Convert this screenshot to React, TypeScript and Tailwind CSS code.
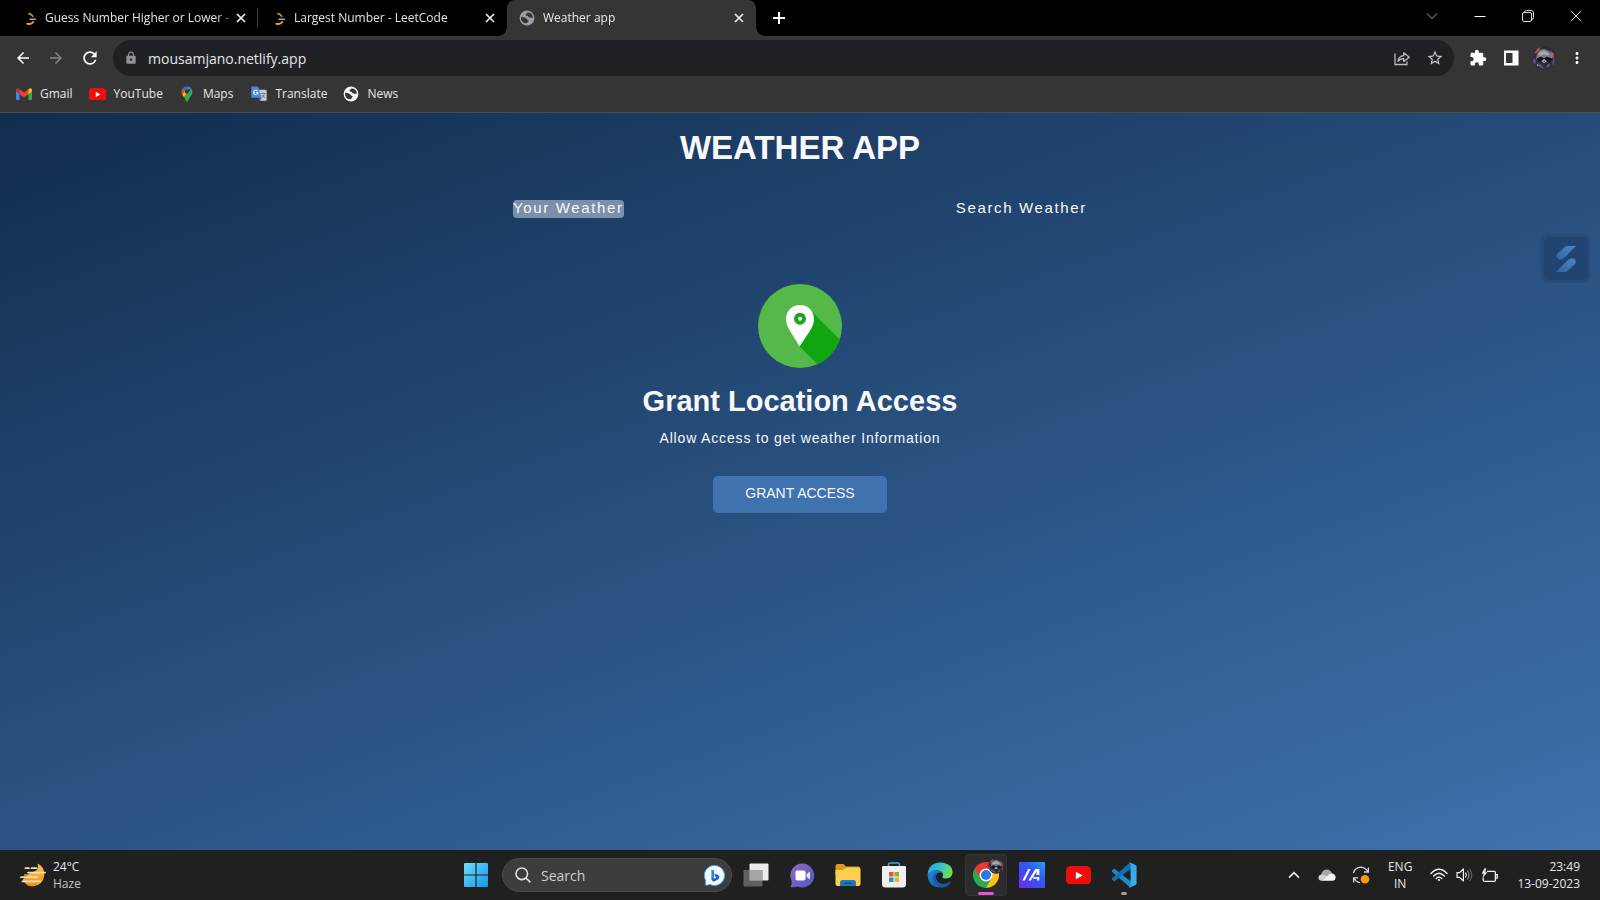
import type { ReactNode } from "react";
import {
  MdArrowBack,
  MdArrowForward,
  MdExtension,
  MdLock,
  MdMoreVert,
  MdRefresh,
  MdStarBorder,
} from "react-icons/md";

function GlobeIcon({ disc, land }: { disc: string; land: string }) {
  return (
    <svg viewBox="0 0 16 16" className="size-4 shrink-0" aria-hidden="true">
      <circle cx="8" cy="8" r="7.4" fill={disc} />
      <path
        d="M2.2 6.6 5.6 7.4Q7 7.6 7.6 8.8 8.3 10.2 9.2 10.1 10 10.2 9.4 11.3 8.6 12.6 7.4 13.2 4 13.4 2.4 10.2 1.8 8.2 2.2 6.6Z"
        fill={land}
      />
      <path
        d="M8.6 2.2Q8.6 3.4 7.4 3.6 6.2 4 6.8 5.2 7.4 5.8 8.6 5.7 9.2 7.4 10.6 7.4L13.6 8Q14 6.2 13 4.6 11.4 2.4 8.6 2.2Z"
        fill={land}
      />
    </svg>
  );
}

function LeetCodeIcon() {
  return (
    <svg viewBox="0 0 16 16" className="size-4 shrink-0" fill="none" strokeLinecap="round" aria-hidden="true">
      <path d="M8 3.6Q10.4 4 11.8 6.4" stroke="#d8942a" strokeWidth="1.6" />
      <path d="M6.4 13.8Q10.6 14.6 12.2 12" stroke="#f0a02c" strokeWidth="2" />
      <path d="M9 9.2H14.4" stroke="#a3a3a3" strokeWidth="1.5" />
    </svg>
  );
}

function CloseIcon() {
  return (
    <svg viewBox="0 0 10 10" className="size-[10px]" stroke="#f1f1f1" strokeWidth="1.7" aria-hidden="true">
      <path d="M1 1 9 9M9 1 1 9" />
    </svg>
  );
}

function BrowserTab({ title, icon, active = false, divider = false }: { title: string; icon: ReactNode; active?: boolean; divider?: boolean }) {
  return (
    <div
      className={
        active
          ? "relative flex h-9 w-[249px] items-center rounded-t-lg bg-[#353535] px-3 text-[#ececec]"
          : "relative flex h-9 w-[249px] items-center px-3 text-[#e4e4e4]"
      }
    >
      {icon}
      <button className="ml-2 flex-1 text-left whitespace-nowrap [mask-image:linear-gradient(to_right,black_92%,rgb(0_0_0/0.3))]">
        {title}
      </button>
      <button aria-label={`Close ${title}`} className="ml-1 flex size-[10px] items-center">
        <CloseIcon />
      </button>
      {divider && <span className="absolute top-2 right-0 h-5 w-px bg-[#3f3f3f]" />}
      {active && (
        <>
          <span className="absolute bottom-0 -left-2 size-2 bg-[radial-gradient(circle_at_0_0,#000_7px,#353535_8px)]" />
          <span className="absolute -right-2 bottom-0 size-2 bg-[radial-gradient(circle_at_100%_0,#000_7px,#353535_8px)]" />
        </>
      )}
    </div>
  );
}

function TabStrip() {
  return (
    <header className="flex h-9 items-center bg-black pl-[9px] text-[12px]">
      <div className="flex items-center">
        <div className="flex">
          <BrowserTab title="Guess Number Higher or Lower -" icon={<LeetCodeIcon />} divider />
          <BrowserTab title="Largest Number - LeetCode" icon={<LeetCodeIcon />} />
          <BrowserTab title="Weather app" icon={<GlobeIcon disc="#9aa0a6" land="#353535" />} active />
        </div>
        <button aria-label="New tab" className="ml-[15px] p-px">
          <svg viewBox="0 0 14 14" className="size-[14px]" stroke="#fff" strokeWidth="2">
            <path d="M7 1V13M1 7H13" />
          </svg>
        </button>
      </div>
      <div className="-mt-1 ml-auto flex items-center text-white">
        <button aria-label="Search tabs" className="flex w-12 justify-center">
          <svg viewBox="0 0 12 12" className="size-3" fill="none" stroke="#aaa">
            <path d="M1 3.5 6 8.5 11 3.5" />
          </svg>
        </button>
        <button aria-label="Minimize" className="flex w-12 justify-center">
          <svg viewBox="0 0 12 12" className="size-3" fill="none" stroke="#fff">
            <path d="M0.5 6.5H11.5" />
          </svg>
        </button>
        <button aria-label="Restore" className="flex w-12 justify-center">
          <svg viewBox="0 0 12 12" className="size-3" fill="none" stroke="#ddd">
            <rect x="0.5" y="2.5" width="9" height="9" rx="1.5" />
            <path d="M2.5 2.5Q2.5 0.5 4.5 0.5H9Q11.5 0.5 11.5 3V7.5Q11.5 9.5 9.5 9.5" />
          </svg>
        </button>
        <button aria-label="Close window" className="flex w-12 justify-center">
          <svg viewBox="0 0 12 12" className="size-3" stroke="#ddd">
            <path d="M0.8 0.8 11.2 11.2M11.2 0.8 0.8 11.2" />
          </svg>
        </button>
      </div>
    </header>
  );
}

function RaccoonAvatar({ className }: { className: string }) {
  return (
    <svg viewBox="0 0 24 24" className={className} aria-hidden="true">
      <circle cx="12" cy="12" r="11.5" fill="#2f2a3c" />
      <path d="M2 8 5 3 9 1 6 6ZM18 4 22 8 22 13 20 11Z" fill="#b5594c" />
      <path d="M1 14 3 12 4 17 2 18ZM21 14 23 13 22 18 20 19Z" fill="#6c4a8c" />
      <path d="M5 8 8 4 12 3 17 5 20 9 20 12 17 15H7L4 13Z" fill="#7d7f88" />
      <path d="M6 7 12 4.5 18 8 15 9.6 12 8.6 8 10Z" fill="#a4a8af" />
      <path d="M4.5 12.4 9 10.8 12 12.2 15 10.8 20 12.6 18 16 12.5 14 6.6 16Z" fill="#16131d" />
      <path d="M9.6 15.4 12 12.8 14.6 15.4 12.2 17Z" fill="#c9cbd2" />
      <path d="M11 14.8H13.4L12.2 16.2Z" fill="#111" />
      <path d="M6 17 10 19 12 23 7 21ZM18 17 14 20 15 22 18 20Z" fill="#5b5478" />
      <path d="M4.6 17.6 6.6 19.4 5.8 20.4Z" fill="#d9dbe2" />
    </svg>
  );
}

function Toolbar() {
  return (
    <div className="flex h-10 items-end bg-[#353535] pr-[7px] pl-[14px]">
      <nav aria-label="Navigation" className="flex h-9 items-center gap-[15px] pr-[13px] text-white">
        <button aria-label="Back"><MdArrowBack className="size-[18px]" /></button>
        <button aria-label="Forward"><MdArrowForward className="size-[18px] text-[#868686]" /></button>
        <button aria-label="Reload"><MdRefresh className="size-5" /></button>
      </nav>
      <div className="flex h-9 flex-1 items-center rounded-full bg-[#202124] pr-[10px] pl-[11px]">
        <MdLock className="size-[14px] text-[#8f949c]" />
        <input
          aria-label="Address"
          defaultValue="mousamjano.netlify.app"
          className="ml-[10px] flex-1 bg-transparent text-[14px] text-[#e4e6ea] outline-none"
        />
        <button aria-label="Share" className="mr-4">
          <svg viewBox="0 0 16 16" className="size-4" fill="none" stroke="#b9bbbe" strokeWidth="1.3">
            <path d="M1 3.5V14.5H13V11.5" />
            <path d="M4 11.5Q4.4 6.2 9.8 5.7V2.7L15.2 7.2 9.8 11.6V8.7Q6 8.6 4 11.5Z" strokeLinejoin="round" />
          </svg>
        </button>
        <button aria-label="Bookmark"><MdStarBorder className="size-[18px] text-[#c4c6c9]" /></button>
      </div>
      <div className="flex h-9 items-center pl-[7px] text-white">
        <button aria-label="Extensions" className="flex w-[33px] justify-center"><MdExtension className="size-[18px]" /></button>
        <button aria-label="Side panel" className="flex w-[33px] justify-center">
          <svg viewBox="0 0 16 16" className="size-4">
            <path d="M1 0.5H15.5V15.5H1ZM3 3V13H9.5V3Z" fill="#fff" fillRule="evenodd" />
          </svg>
        </button>
        <button aria-label="Profile" className="flex w-[33px] justify-center"><RaccoonAvatar className="size-6" /></button>
        <button aria-label="Menu" className="flex w-[33px] justify-center"><MdMoreVert className="size-[18px]" /></button>
      </div>
    </div>
  );
}

function YouTubeIcon({ className }: { className: string }) {
  return (
    <svg viewBox="0 0 24 18" className={className} aria-hidden="true">
      <rect width="24" height="18" rx="4.5" fill="#f20d0d" />
      <path d="M9.5 5.4 16 9 9.5 12.6Z" fill="#fff" />
    </svg>
  );
}

function Bookmarks() {
  return (
    <nav aria-label="Bookmarks" className="flex h-[37px] items-center border-b border-[#4a4d51] bg-[#353535] pl-4 text-[12px] text-[#e6e6e6]">
      <a href="#gmail" className="mr-4 flex items-center gap-2">
        <svg viewBox="0 0 16 12" className="w-4" aria-hidden="true">
          <path d="M0 2V11Q0 12 1 12H3.6V4.6Z" fill="#4285f4" />
          <path d="M16 2V11Q16 12 15 12H12.4V4.6Z" fill="#34a853" />
          <path d="M3.6 1.2 8 4.6 12.4 1.2V6.2L8 9.5 3.6 6.2Z" fill="#ea4335" />
          <path d="M0 1.9Q0 0 2 0.2L3.6 1.2V6.2L0 3.5Z" fill="#c5362b" />
          <path d="M16 1.9Q16 0 14 0.2L12.4 1.2V6.2L16 3.5Z" fill="#fbbc04" />
        </svg>
        Gmail
      </a>
      <a href="#youtube" className="mr-4 flex items-center gap-2">
        <YouTubeIcon className="w-[17px]" />
        YouTube
      </a>
      <a href="#maps" className="mr-[18px] flex items-center gap-2">
        <svg viewBox="0 0 16 16" className="size-4" aria-hidden="true">
          <path d="M8 0.3Q5.4 0.3 3.7 2.2L6.4 4.5 10 0.7Q9 0.3 8 0.3Z" fill="#1a73e8" />
          <path d="M3.7 2.2Q1.6 5 3.2 8.2L6.4 4.5Z" fill="#ea4335" />
          <path d="M10 0.7 6.4 4.5Q7.4 3.2 8.7 3.7L12.4 2.4Q11.6 1.2 10 0.7Z" fill="#4285f4" />
          <path d="M12.4 2.4 5 11.2 3.2 8.2 6.4 4.5Q6 7 8 7.8Q10 7.6 10 5.6Z" fill="#fbbc04" />
          <path d="M12.4 2.4Q14.6 5.6 12.4 9.2 9.7 12.2 9 15.2 8 16.4 7.1 15.2 6.4 12.8 5 11.2Z" fill="#34a853" />
          <circle cx="8" cy="5.7" r="1.9" fill="#353535" />
        </svg>
        Maps
      </a>
      <a href="#translate" className="mr-4 flex items-center gap-2">
        <svg viewBox="0 0 17 16" className="w-4" aria-hidden="true">
          <path d="M7 4H15.6Q16.6 4 16.6 5V14.8Q16.6 15.8 15.6 15.8H9.6Z" fill="#c9cdd3" />
          <path d="M10.2 8H15.4M12.8 6.8V8M14.6 8Q13.6 11 11 12.4M11.4 9.4Q12.4 11.4 14.8 12.6" stroke="#6f7d8c" fill="none" />
          <path d="M1.2 0.4H7.6L11.2 12.4H1.2Q0.3 12.4 0.3 11.4V1.4Q0.3 0.4 1.2 0.4Z" fill="#4a86e8" />
          <path d="M7.4 12.4H11.2L9.6 15.8Z" fill="#2a56c6" />
          <path d="M6.9 5.3A2.3 2.3 0 1 0 7.4 6.9H5.2" stroke="#fff" strokeWidth="1.1" fill="none" />
        </svg>
        Translate
      </a>
      <a href="#news" className="flex items-center gap-2">
        <GlobeIcon disc="#f4f4f4" land="#353535" />
        News
      </a>
    </nav>
  );
}

function LocationIcon() {
  return (
    <svg viewBox="0 0 84 84" className="size-[84px]" aria-hidden="true">
      <circle cx="42" cy="42" r="42" fill="#54b948" />
      <path d="M53.5 27.5 81.8 55.4A42 42 0 0 1 59.5 80.2L41.5 62.5Z" fill="#11a611" />
      <path
        d="M42 21C34 21 28 27 28 35.5 28 40 30.6 44.8 33.6 49.4Q38 56 41.6 62.6 45.5 56 50.2 49.4C53.4 44.8 56 40 56 35.5 56 27 50 21 42 21Z"
        fill="#fff"
      />
      <circle cx="42" cy="34.8" r="4" fill="none" stroke="#1ca51c" strokeWidth="4" />
    </svg>
  );
}

function WeatherPage() {
  return (
    <main className="relative flex flex-1 flex-col items-center bg-[linear-gradient(160deg,#112d4e_0%,#3f72af_100%)] font-['Liberation_Sans',Arial,sans-serif] text-[#f9f7f7]">
      <h1 className="mt-4 text-[33px] leading-[38px] font-bold">WEATHER APP</h1>
      <div className="mt-[33px] flex w-full max-w-[574px] justify-between text-[15px] leading-4 tracking-[0.11em]">
        <button className="rounded bg-[#dbe2ef]/50 pb-[2px]">Your Weather</button>
        <button className="pb-[2px]">Search Weather</button>
      </div>
      <section className="mt-[66px] flex flex-col items-center">
        <LocationIcon />
        <h2 className="mt-4 text-[29px] leading-[34px] font-bold">Grant Location Access</h2>
        <p className="mt-3 text-[14px] leading-4 tracking-[0.06em]">Allow Access to get weather Information</p>
        <button className="mt-[30px] rounded-[5px] bg-[#3f72af] px-8 pt-2 pb-[11px] text-[14px] leading-[18px]">GRANT ACCESS</button>
      </section>
      <button
        aria-label="Open assistant"
        className="absolute top-[121px] right-[10px] flex size-[49px] items-center justify-center rounded-lg border-3 border-[#254b7b] bg-[#224471]"
      >
        <svg viewBox="0 0 24 30" className="h-[30px] w-6" aria-hidden="true">
          <defs>
            <linearGradient id="widget-stroke" x1="0" y1="1" x2="1" y2="0">
              <stop offset="0" stopColor="#2f66a6" />
              <stop offset="1" stopColor="#4a86c4" />
            </linearGradient>
          </defs>
          <path d="M12 2H22L10 14Q7 17 4 14.5 1 12 4 9Z" fill="url(#widget-stroke)" />
          <path d="M12 28H2L14 16Q17 13 20.5 15 23 17.5 20.5 20.5Z" fill="url(#widget-stroke)" />
        </svg>
      </button>
    </main>
  );
}

function WindowsIcon() {
  return (
    <svg viewBox="0 0 24 24" className="size-6">
      <defs>
        <linearGradient id="win" x1="0" y1="0" x2="1" y2="1">
          <stop offset="0" stopColor="#6fdcfb" />
          <stop offset="1" stopColor="#1593ea" />
        </linearGradient>
      </defs>
      <path d="M1 0H11.4V11.4H0V1Q0 0 1 0ZM12.6 0H23Q24 0 24 1V11.4H12.6ZM0 12.6H11.4V24H1Q0 24 0 23ZM12.6 12.6H24V23Q24 24 23 24H12.6Z" fill="url(#win)" />
    </svg>
  );
}

function TaskViewIcon() {
  return (
    <svg viewBox="0 0 26 24" className="w-[26px]">
      <rect x="6.5" y="0.5" width="19" height="17" rx="1" fill="#ececec" />
      <rect x="0.5" y="7" width="19" height="16.5" rx="1" fill="#6c6c6c" fillOpacity="0.85" />
      <path d="M6.5 7H19.5V17.5H6.5Z" fill="#a6a6a6" />
    </svg>
  );
}

function ChatIcon() {
  return (
    <svg viewBox="0 0 25 25" className="size-[25px]">
      <defs>
        <linearGradient id="chat" x1="0" y1="0" x2="1" y2="1">
          <stop offset="0" stopColor="#8a6bb8" />
          <stop offset="1" stopColor="#5059c9" />
        </linearGradient>
      </defs>
      <path d="M12.5 0.5A12 12 0 1 1 7.2 23.4Q4 24.6 1 24.2 0.2 24 0.8 23 2 21 1.6 18A12 12 0 0 1 12.5 0.5Z" fill="url(#chat)" />
      <rect x="5.5" y="7.5" width="10" height="10" rx="1.8" fill="#fff" />
      <path d="M16.5 11.2 20 8.6V16.4L16.5 13.8Z" fill="#e6e3f7" />
    </svg>
  );
}

function FolderIcon() {
  return (
    <svg viewBox="0 0 26 24" className="w-[26px]">
      <path d="M0.5 3Q0.5 1 2.5 1H8.5L11 3.5H23.5Q25 3.5 25 5V12H0.5Z" fill="#d99a1e" />
      <path d="M0.5 7H8L11 4.5H24Q25.5 4.5 25.5 6V21Q25.5 23 23.5 23H2.5Q0.5 23 0.5 21Z" fill="#fbd04e" />
      <path d="M5 23V19.5Q5 17 7.5 17H18.5Q21 17 21 19.5V23Z" fill="#1c7cc4" />
      <path d="M9 19.6H17V21H9Z" fill="#0b4f86" />
    </svg>
  );
}

function StoreIcon() {
  return (
    <svg viewBox="0 0 24 26" className="h-[26px]">
      <path d="M6.5 5V2.6Q6.5 1 8 1H16Q17.5 1 17.5 2.6V5" fill="none" stroke="#35a4de" strokeWidth="1.6" />
      <path d="M0 5Q0 4 1 4H23Q24 4 24 5V22Q24 25.5 20.5 25.5H3.5Q0 25.5 0 22Z" fill="#efefef" />
      <rect x="7" y="10" width="4.5" height="4.5" fill="#e9532a" />
      <rect x="12.5" y="10" width="4.5" height="4.5" fill="#7fb72c" />
      <rect x="7" y="15.5" width="4.5" height="4.5" fill="#1f8fdc" />
      <rect x="12.5" y="15.5" width="4.5" height="4.5" fill="#f2b51f" />
    </svg>
  );
}

function EdgeIcon() {
  return (
    <svg viewBox="0 0 26 26" className="size-[26px]">
      <defs>
        <linearGradient id="edge-top" x1="0" y1="0" x2="1" y2="0.4">
          <stop offset="0" stopColor="#2a9fe0" />
          <stop offset="0.5" stopColor="#31c1cf" />
          <stop offset="1" stopColor="#6fdc5a" />
        </linearGradient>
        <linearGradient id="edge-low" x1="0" y1="0" x2="1" y2="1">
          <stop offset="0" stopColor="#1c8fdc" />
          <stop offset="1" stopColor="#10559f" />
        </linearGradient>
      </defs>
      <path d="M0.6 13Q1 1 13.4 0.5 25.5 1.4 25.6 10.6 25.2 16.4 18.6 16.6 15.6 16.4 15.3 15.2 16.6 13.2 15.8 11.4 13.8 8 9 8.2 3.4 8.6 0.6 13Z" fill="url(#edge-top)" />
      <path d="M0.6 13Q3 8.4 8.6 8.2 13 8.2 15.4 10.8 10.4 9.4 9 13.8 8 20.6 15.6 22.4 20 22.6 23.6 19.8 19.8 25.6 13 25.6 1.4 25 0.6 13Z" fill="url(#edge-low)" />
      <path d="M9 13.8Q8 19.6 13 21.6 18.6 22.9 23.4 19.4 24.4 19.4 23.6 20.6 20.4 25.4 14.6 25.5 5.4 23 6 16 6.6 11.4 11 10.3 9.6 11.6 9 13.8Z" fill="#155ca6" />
    </svg>
  );
}

function ChromeIcon() {
  return (
    <svg viewBox="0 0 26 26" className="size-[26px]">
      <path d="M13 13 1.74 6.5A13 13 0 0 1 24.26 6.5Z" fill="#e33b2e" />
      <path d="M13 13 24.26 6.5A13 13 0 0 1 13 26Z" fill="#fbc116" />
      <path d="M13 13 13 26A13 13 0 0 1 1.74 6.5Z" fill="#2da94f" />
      <path d="M7.4 16.2 1.74 6.5 13 6.5Z" fill="#e33b2e" />
      <path d="M18.6 16.2 13 26 11.4 25.9 7.4 16.2Z" fill="#2da94f" />
      <circle cx="13" cy="13" r="6.5" fill="#fff" />
      <circle cx="13" cy="13" r="5" fill="#2a78e8" />
    </svg>
  );
}

function MyAsusIcon() {
  return (
    <svg viewBox="0 0 26 26" className="size-[26px]">
      <defs>
        <linearGradient id="asus" x1="0" y1="1" x2="1" y2="0">
          <stop offset="0" stopColor="#6a2cf0" />
          <stop offset="0.6" stopColor="#2f5af0" />
          <stop offset="1" stopColor="#1aa6ee" />
        </linearGradient>
      </defs>
      <rect width="26" height="26" fill="url(#asus)" />
      <path d="M3.4 18.6H5.8L11.6 7H9.2Z" fill="#fff" />
      <path d="M9.4 18.6H11.8L17.6 9.6V13H20.4V7H16.4Z" fill="#fff" />
      <path d="M14.2 15H20.4V18.6H18V17H14.2Z" fill="#d5e6ff" />
    </svg>
  );
}

function VsCodeIcon() {
  return (
    <svg viewBox="0 0 26 26" className="size-[26px]">
      <path d="M1 8.4 2.6 7Q3.2 6.6 3.8 7L20 19.6V24.6Q19 25.4 18 24.6L1 9.8Q0.4 9 1 8.4Z" fill="#2489ca" />
      <path d="M1 17.6 2.6 19Q3.2 19.4 3.8 19L20 6.4V1.4Q19 0.6 18 1.4L1 16.2Q0.4 17 1 17.6Z" fill="#1070b3" />
      <path d="M19 0.5 25 3.2Q25.6 3.6 25.6 4.4V21.6Q25.6 22.4 25 22.8L19 25.5Q18.2 25.6 17.7 25 19.6 24.8 19.6 23V3Q19.6 1.2 17.7 1 18.2 0.4 19 0.5Z" fill="#39a9f0" />
    </svg>
  );
}

function BingIcon() {
  return (
    <svg viewBox="0 0 21 21" className="size-[21px]">
      <path d="M10.5 0.5A10 10 0 1 1 6 19.4Q3.4 20.4 1.2 20 1.8 18 1.4 15A10 10 0 0 1 10.5 0.5Z" fill="#f3fbff" stroke="#3fa9e6" />
      <path d="M7.4 4.4 10 5.4V13.8L7.4 12.6Z" fill="#1d8fe0" />
      <path d="M10.2 8.4 14 10Q16.4 11.4 14.6 14L10.4 16.4Q7.6 16.6 7.4 13.6V12L10 13.8 12.4 12.4 11.2 11.4Z" fill="#1a63d0" />
    </svg>
  );
}

function HazeIcon() {
  return (
    <svg viewBox="0 0 26 26" className="size-[26px]" aria-hidden="true">
      <defs>
        <linearGradient id="haze" x1="0" y1="0" x2="0" y2="1">
          <stop offset="0" stopColor="#f8c64a" />
          <stop offset="1" stopColor="#ee9420" />
        </linearGradient>
      </defs>
      <path d="M17.5 1.6Q24.6 5 24.4 13 23 23.6 13 24.4 5.4 24 2.6 17.4L9 12 17 8Q19 5 17.5 1.6Z" fill="url(#haze)" />
      <path d="M5.4 6.2H9M11.6 6.2H16.6M8 10.6H25M1 15.2H17M2.4 19.4H20" stroke="#f7dfa8" strokeWidth="1.8" strokeLinecap="round" />
      <path d="M4 13H12" stroke="#f2c96c" strokeWidth="1.2" />
    </svg>
  );
}

function TaskButton({ label, children }: { label: string; children: ReactNode }) {
  return (
    <button aria-label={label} className="relative flex h-[42px] w-[46px] items-center justify-center">
      {children}
    </button>
  );
}

function Taskbar() {
  return (
    <footer className="grid h-[50px] grid-cols-[1fr_auto_1fr] items-center bg-[#202020] text-[12px] text-[#e6e6e6]">
      <button className="flex items-center gap-[7px] justify-self-start pl-5 text-left">
        <HazeIcon />
        <span className="flex flex-col leading-[17px]">
          <span>24°C</span>
          <span className="text-[#c4c4c4]">Haze</span>
        </span>
      </button>
      <div className="flex items-center">
        <TaskButton label="Start"><WindowsIcon /></TaskButton>
        <label className="mr-px ml-[3px] flex h-[34px] w-[230px] items-center rounded-full border border-[#4b4b4b] bg-[#3d3d3d] pr-[6px] pl-3">
          <svg viewBox="0 0 16 16" className="size-4" fill="none" stroke="#e4e4e4" strokeWidth="1.6">
            <circle cx="6.8" cy="6.8" r="5.8" />
            <path d="M11 11 15.4 15.4" />
          </svg>
          <input
            aria-label="Search"
            placeholder="Search"
            className="ml-[10px] w-0 flex-1 bg-transparent text-[14px] outline-none placeholder:text-[#cfcfcf]"
          />
          <BingIcon />
        </label>
        <TaskButton label="Task view"><TaskViewIcon /></TaskButton>
        <TaskButton label="Chat"><ChatIcon /></TaskButton>
        <TaskButton label="File Explorer"><FolderIcon /></TaskButton>
        <TaskButton label="Microsoft Store"><StoreIcon /></TaskButton>
        <TaskButton label="Edge"><EdgeIcon /></TaskButton>
        <TaskButton label="Chrome">
          <span className="flex h-[42px] w-[42px] items-center justify-center rounded border border-[#343434] bg-[#2c2c2c]">
            <ChromeIcon />
          </span>
          <RaccoonAvatar className="absolute top-1 right-[5px] size-4" />
          <span className="absolute bottom-px h-[3px] w-4 rounded-full bg-[#e157d2]" />
        </TaskButton>
        <TaskButton label="MyASUS"><MyAsusIcon /></TaskButton>
        <TaskButton label="YouTube"><YouTubeIcon className="w-[25px]" /></TaskButton>
        <TaskButton label="Visual Studio Code">
          <VsCodeIcon />
          <span className="absolute bottom-px h-[3px] w-[6px] rounded-full bg-[#9b9b9b]" />
        </TaskButton>
      </div>
      <div className="flex items-center justify-self-end pr-5">
        <button aria-label="Show hidden icons" className="mr-[18px]">
          <svg viewBox="0 0 12 8" className="w-3" fill="none" stroke="#e8e8e8" strokeWidth="1.6">
            <path d="M1 6.6 6 1.6 11 6.6" />
          </svg>
        </button>
        <button aria-label="OneDrive" className="mr-4">
          <svg viewBox="0 0 18 12" className="w-[18px]">
            <path d="M3 6Q4 1 8.6 0.6 12.4 0.6 14 4.4L9 8Z" fill="#a9a9a9" />
            <path d="M3.6 11.8Q0.4 11.6 0.4 8.6 0.8 5.4 4 5.4 5.6 5.2 7.6 6.6L9.4 7.6Z" fill="#d2d2d2" />
            <path d="M3.6 11.8 11 5.4Q12.6 4 14.4 4.6 17.6 5.4 17.6 8.6 17.2 11.8 14.4 11.8Z" fill="#f4f4f4" />
          </svg>
        </button>
        <button aria-label="Windows Update" className="mr-[18px]">
          <svg viewBox="0 0 18 18" className="size-[18px]" fill="none" stroke="#d2d2d2" strokeWidth="1.3">
            <path d="M1.4 7Q3 1.4 9 1.2 13.4 1.6 16 5.6M16.4 1.4V6H12" />
            <path d="M8 16.6Q4 16 2 12M1.6 16.4V11.8H6" />
            <circle cx="13" cy="13.2" r="4.3" fill="#f7980f" stroke="none" />
          </svg>
        </button>
        <button className="mr-[18px] flex flex-col items-center leading-[17px]">
          <span>ENG</span>
          <span>IN</span>
        </button>
        <button aria-label="Network, volume and battery" className="mr-[19px] flex items-center gap-2">
          <svg viewBox="0 0 18 14" className="w-[18px]" fill="none" stroke="#f0f0f0" strokeWidth="1.4" strokeLinecap="round">
            <path d="M1 5.4Q9-3 17 5.4M3.6 8Q9 2.4 14.4 8M6.2 10.4Q9 7.6 11.8 10.4" />
            <circle cx="9" cy="12" r="1.1" fill="#f0f0f0" stroke="none" />
          </svg>
          <svg viewBox="0 0 17 14" className="w-[17px]" fill="none" strokeWidth="1.2" strokeLinecap="round" strokeLinejoin="round">
            <path d="M1 4.6H3.6L7.4 1V13L3.6 9.4H1Z" stroke="#f0f0f0" />
            <path d="M9.6 5Q11 7 9.6 9" stroke="#f0f0f0" />
            <path d="M11.6 3Q14.4 7 11.6 11" stroke="#8b8b8b" />
            <path d="M13.8 1.4Q17.8 7 13.8 12.6" stroke="#5c5c5c" />
          </svg>
          <svg viewBox="0 0 17 15" className="w-[17px]" fill="none" stroke="#f0f0f0" strokeWidth="1.3">
            <path d="M6 3.4H13.2Q14.4 3.4 14.4 4.8V12Q14.4 13.4 13.2 13.4H3.6Q2.2 13.4 2.2 12V9.4" />
            <path d="M15 6.6H16.2V10.2H15" />
            <path d="M3.6 0.6 1 5.4H3L2 9.2 6 4.4H4L5 0.6Z" fill="#f0f0f0" strokeWidth="0.4" />
          </svg>
        </button>
        <button className="flex flex-col items-end leading-[17px]">
          <span>23:49</span>
          <span>13-09-2023</span>
        </button>
      </div>
    </footer>
  );
}

export default function App() {
  return (
    <div className="flex min-h-screen flex-col bg-[#202020] font-['Open_Sans','Noto_Sans',sans-serif]">
      <TabStrip />
      <Toolbar />
      <Bookmarks />
      <WeatherPage />
      <Taskbar />
    </div>
  );
}
